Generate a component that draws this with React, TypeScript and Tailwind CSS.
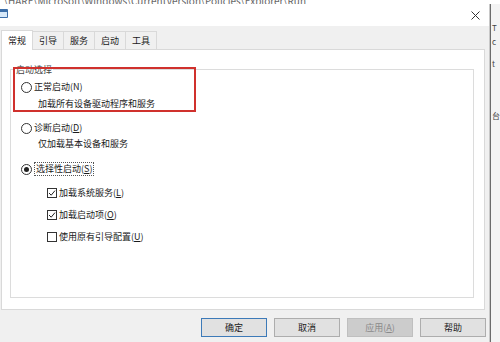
import React from "react";

const FONT = { fontFamily: '"Noto Sans CJK SC", "Noto Sans", sans-serif' };

function Radio({ checked }: { checked?: boolean }) {
  return (
    <span className="flex h-[11px] w-[11px] shrink-0 items-center justify-center rounded-full border border-[#333] bg-white">
      {checked && <span className="h-[5px] w-[5px] rounded-full bg-[#222]" />}
    </span>
  );
}

function Check({ checked }: { checked?: boolean }) {
  return (
    <span className="flex h-[10px] w-[10px] shrink-0 items-center justify-center border border-[#333] bg-white">
      {checked && (
        <svg width="8" height="8" viewBox="0 0 8 8">
          <path d="M1 4 L3.2 6.2 L7 1.6" fill="none" stroke="#222" strokeWidth="1" />
        </svg>
      )}
    </span>
  );
}

function Key({ label, k }: { label: string; k: string }) {
  return (
    <span>
      {label}(<span className="underline underline-offset-1">{k}</span>)
    </span>
  );
}

const tabs = ["常规", "引导", "服务", "启动", "工具"];

export default function App() {
  return (
    <div className="relative h-[342px] w-[500px] overflow-hidden bg-white text-[9px] text-[#1a1a1a]" style={FONT}>
      {/* window behind, only its bottom edge shows */}
      <div className="h-[4px] overflow-hidden bg-white">
        <div className="-mt-[7px] whitespace-nowrap pl-1 text-[10px] text-[#666]">
          \HARE\Microsoft\Windows\CurrentVersion\Policies\Explorer\Run
        </div>
      </div>

      <div className="flex h-[338px]">
        <div className="flex w-[494px] flex-col border-r border-[#c8c8c8] bg-[#f0f0f0]">
          {/* title bar */}
          <div className="flex h-[22px] items-start justify-between bg-white pr-[9px]">
            <div className="-ml-[3px] mt-[5px] flex h-[9px] w-[11px] items-end justify-center rounded-[1px] bg-[#3c6ea8] pb-[1px]">
              <div className="h-[5px] w-[8px] bg-[#d7e8f8]" />
            </div>
            <svg className="mt-[7px]" width="9" height="9" viewBox="0 0 9 9">
              <path d="M0.5 0.5 L8.5 8.5 M8.5 0.5 L0.5 8.5" stroke="#333" strokeWidth="1" />
            </svg>
          </div>

          {/* tabs */}
          <div className="flex h-[23px] items-end pl-[1px]">
            {tabs.map((t, i) =>
              i === 0 ? (
                <div key={t} className="relative z-10 -mb-px flex h-[20px] w-[32px] items-center justify-center border border-b-0 border-[#d9d9d9] bg-white">
                  {t}
                </div>
              ) : (
                <div key={t} className="-ml-px flex h-[18px] w-[32px] items-center justify-center border border-b-0 border-[#d9d9d9] bg-[#f0f0f0]">
                  {t}
                </div>
              )
            )}
          </div>

          {/* panel */}
          <div className="ml-[1px] mr-[4px] h-[261px] border border-[#d9d9d9] bg-white pl-[8px] pr-[10px] pt-[19px]">
            <div className="relative h-[229px] border border-[#dcdcdc]">
              <span className="absolute -top-[6px] left-[4px] bg-white px-[1px] leading-[12px] text-[#444]">启动选择</span>
              <div className="absolute -top-[3px] left-[2px] h-[45px] w-[183px] border-2 border-[#d0312d]" />

              <div className="flex flex-col pl-[10px] pt-[9px]">
                <div className="flex h-[16px] items-center gap-[2px]">
                  <Radio />
                  <span>正常启动(N)</span>
                </div>
                <div className="mt-[1px] flex h-[16px] items-center pl-[17px]">加载所有设备驱动程序和服务</div>

                <div className="mt-[8px] flex h-[16px] items-center gap-[2px]">
                  <Radio />
                  <Key label="诊断启动" k="D" />
                </div>
                <div className="flex h-[16px] items-center pl-[17px]">仅加载基本设备和服务</div>

                <div className="mt-[9px] flex h-[16px] items-center gap-[2px]">
                  <Radio checked />
                  <span className="border border-dotted border-[#555] px-[1px] leading-[12px]">
                    <Key label="选择性启动" k="S" />
                  </span>
                </div>

                <div className="mt-[8px] flex flex-col gap-[6px] pl-[26px]">
                  <div className="flex h-[16px] items-center gap-[2px]">
                    <Check checked />
                    <Key label="加载系统服务" k="L" />
                  </div>
                  <div className="flex h-[16px] items-center gap-[2px]">
                    <Check checked />
                    <Key label="加载启动项" k="O" />
                  </div>
                  <div className="flex h-[16px] items-center gap-[2px]">
                    <Check />
                    <Key label="使用原有引导配置" k="U" />
                  </div>
                </div>
              </div>
            </div>
          </div>

          {/* buttons */}
          <div className="flex justify-end gap-[7px] pr-[3px] pt-[8px]">
            <button className="h-[19px] w-[66px] border border-[#3d7ab8] bg-[#e1e1e1]">确定</button>
            <button className="h-[19px] w-[66px] border border-[#adadad] bg-[#e1e1e1]">取消</button>
            <button className="h-[19px] w-[66px] border border-[#bfbfbf] bg-[#cccccc] text-[#8a8a8a]">
              应用(<span className="underline underline-offset-1">A</span>)
            </button>
            <button className="h-[19px] w-[66px] border border-[#adadad] bg-[#e1e1e1]">帮助</button>
          </div>
        </div>

        {/* sliver of the window behind */}
        <div className="flex flex-1 flex-col gap-[2px] border-l border-[#6b6b6b] bg-[#f3f3f3] pl-[1px] text-[8px] leading-[12px] text-[#444]">
          <div className="h-[16px]" />
          <div>T</div>
          <div>c</div>
          <div className="mt-[8px]">t</div>
          <div className="mt-[38px]">台</div>
        </div>
      </div>
    </div>
  );
}
